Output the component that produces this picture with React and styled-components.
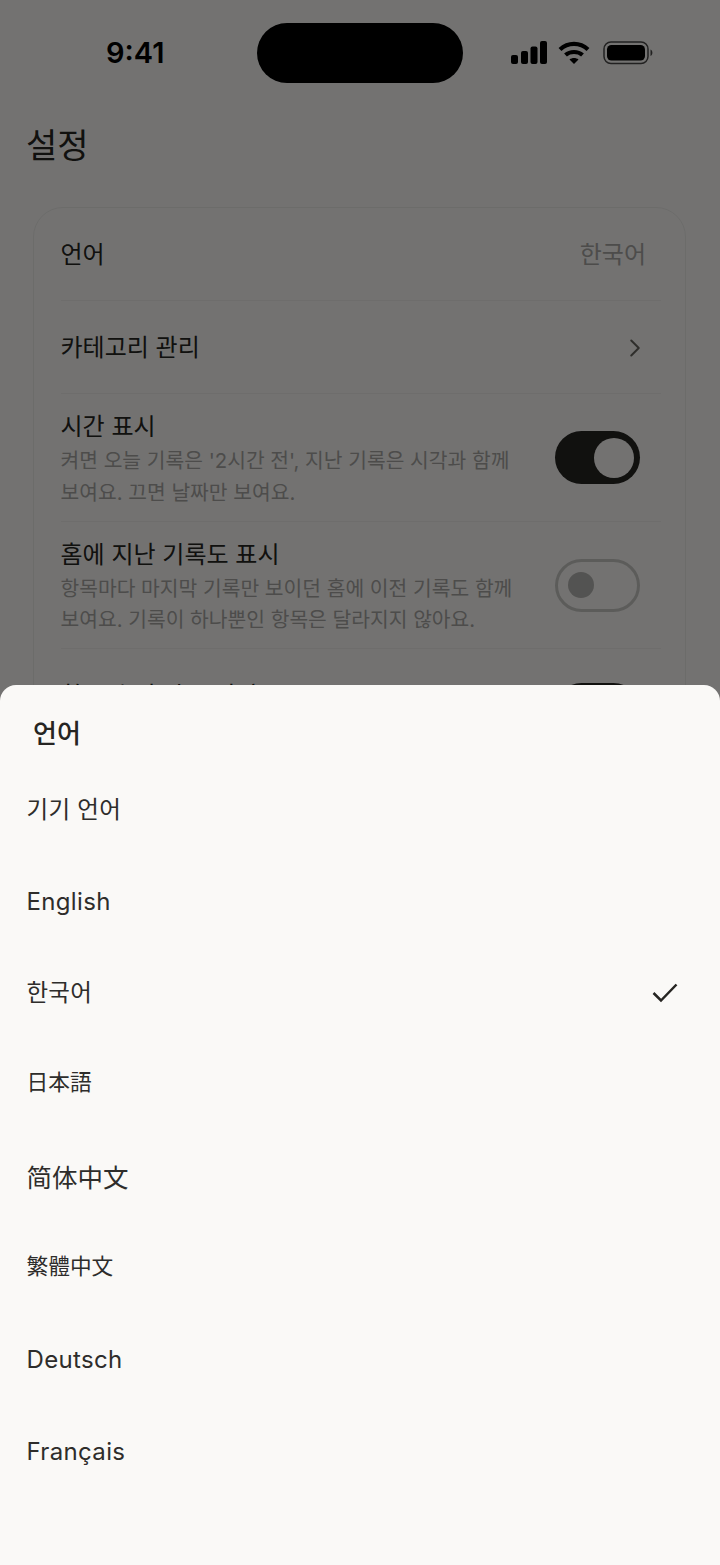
import React from "react";
import styled, { createGlobalStyle } from "styled-components";
import { ChevronRight } from "lucide-react";

const SANS = `Inter, "Noto Sans CJK KR", "Noto Sans", sans-serif`;

const Global = createGlobalStyle`
  html, body { margin: 0; padding: 0; background: #faf9f7; }
  * { box-sizing: border-box; }
  body { font-family: ${SANS}; -webkit-font-smoothing: antialiased; }
`;

const Screen = styled.div`
  position: relative;
  width: 720px;
  height: 1565px;
  overflow: hidden;
  background: #faf9f7;
  color: #262522;
`;

const StatusBar = styled.div`
  display: grid;
  grid-template-columns: 257px 206px 1fr;
  height: 106px;
  padding-top: 23px;
`;

const Clock = styled.div`
  height: 60px;
  padding-left: 106px;
  font: 600 29px/60px Inter, sans-serif;
  color: #000;
`;

const Island = styled.div`
  width: 206px;
  height: 60px;
  border-radius: 30px;
  background: #000;
`;

const StatusIcons = styled.div`
  display: flex;
  align-items: center;
  gap: 12px;
  height: 60px;
  padding-left: 48px;
`;

const Title = styled.h1`
  margin: 0;
  padding: 15px 26px 0;
  height: 101px;
  font: 400 34px/50px ${SANS};
  color: #262522;
`;

const Card = styled.div`
  margin: 0 34px 0 33px;
  padding: 0 24px 0 26.5px;
  height: 700px;
  border: 1.5px solid #ecebe8;
  border-radius: 30px;
`;

const Row = styled.div`
  display: flex;
  align-items: center;
  justify-content: space-between;
  height: 93px;
  padding-top: 2px;
  border-bottom: 1.5px solid #efeeeb;
`;

const RowLabel = styled.div`
  font-size: 24px;
  line-height: 32px;
  color: #262522;
`;

const RowValue = styled.div`
  padding-right: 15px;
  font-size: 24px;
  line-height: 32px;
  color: #a8a7a4;
`;

const Chevron = styled(ChevronRight)`
  margin-right: 11px;
  color: #66655f;
`;

const ToggleRow = styled.div`
  display: flex;
  align-items: flex-start;
  justify-content: space-between;
  height: 127.5px;
  padding-top: ${(p) => (p.$tall ? 31 : 17)}px;
  border-bottom: 1.5px solid #efeeeb;
`;

const ToggleText = styled.div`
  width: 470px;
`;

const ToggleTitle = styled.div`
  font-size: 24px;
  line-height: 32px;
  color: #262522;
`;

const ToggleDesc = styled.div`
  margin-top: 2px;
  font-size: 20.35px;
  line-height: 31.5px;
  color: #a8a7a4;
`;

const Track = styled.div`
  display: flex;
  align-items: center;
  justify-content: ${(p) => (p.$on ? "flex-end" : "flex-start")};
  flex: none;
  width: 85px;
  height: 53px;
  margin: ${(p) => (p.$raised ? 3 : 20)}px 21.5px 0 0;
  padding: 0 ${(p) => (p.$on ? 6 : 0)}px 0 ${(p) => (p.$on ? 0 : 10)}px;
  border-radius: 27px;
  background: ${(p) => (p.$on ? "#262522" : "transparent")};
  border: ${(p) => (p.$on ? "none" : "3px solid #c9c8c5")};
`;

const Knob = styled.div`
  border-radius: 50%;
  width: ${(p) => (p.$on ? 40 : 26)}px;
  height: ${(p) => (p.$on ? 40 : 26)}px;
  background: ${(p) => (p.$on ? "#faf9f7" : "#b6b5b2")};
`;

const Scrim = styled.div`
  position: absolute;
  inset: 0;
  background: rgba(0, 0, 0, 0.54);
`;

const Sheet = styled.div`
  position: absolute;
  left: 0;
  right: 0;
  top: 685px;
  bottom: 0;
  border-radius: 16px 16px 0 0;
  background: #faf9f7;
`;

const SheetTitle = styled.h2`
  margin: 0;
  padding: 31px 33px 0;
  height: 77px;
  font: 500 26px/36px ${SANS};
  color: #262522;
`;

const Option = styled.div`
  display: flex;
  align-items: center;
  justify-content: space-between;
  height: 91.7px;
  padding: 0 42px 0 26.5px;
  color: #2e2d2b;
`;

const OptionLabel = styled.span`
  margin-top: ${(p) => p.$nudge}px;
  font-size: ${(p) => p.$size}px;
  letter-spacing: ${(p) => p.$track}px;
`;

const Check = styled.svg`
  margin-top: 4px;
`;

const CheckIcon = () => (
  <Check width="26" height="22" viewBox="0 0 26 22" fill="none" stroke="#262522" strokeWidth="2.500">
    <path d="M1.500 11 L9 18.500 L24.500 2.500" />
  </Check>
);

const Signal = () => (
  <svg width="36" height="24" viewBox="0 0 36 24" fill="#000">
    <rect x="0" y="14" width="7" height="9" rx="2" />
    <rect x="10" y="10" width="7" height="13" rx="2" />
    <rect x="19.500" y="5.500" width="7" height="17.500" rx="2" />
    <rect x="29" y="0" width="7" height="23" rx="2" />
  </svg>
);

const WifiIcon = styled.svg`
  margin: 0 1px 0 -1px;
`;

const Wifi = () => (
  <WifiIcon width="32" height="24" viewBox="0 0 32 24" fill="none" stroke="#000" strokeWidth="4.200">
    <path d="M2 8.500 C10 1 22 1 30 8.500" />
    <path d="M7.500 14 C12 10 20 10 24.500 14" />
    <path d="M16 23 L11.500 18.500 C14 16.500 18 16.500 20.500 18.500 Z" fill="#000" stroke="none" />
  </WifiIcon>
);

const Battery = () => (
  <svg width="51" height="24" viewBox="0 0 51 24">
    <rect x="1" y="1" width="44" height="21.500" rx="7" fill="none" stroke="#4a4948" strokeWidth="1.500" />
    <rect x="4" y="4" width="38" height="15.500" rx="4.500" fill="#000" />
    <path d="M47.500 8.500 C50 9 50 14.500 47.500 15 Z" fill="#4a4948" />
  </svg>
);

const options = [
  { label: "기기 언어", size: 23.5, track: 0.3, nudge: 0 },
  { label: "English", size: 24, track: 0.35, nudge: 4 },
  { label: "한국어", size: 23.5, track: 0.2, nudge: 0, selected: true },
  { label: "日本語", size: 21.7, track: 0, nudge: -4 },
  { label: "简体中文", size: 25.5, track: 0, nudge: 2 },
  { label: "繁體中文", size: 21.7, track: 0, nudge: -4 },
  { label: "Deutsch", size: 24, track: 0.35, nudge: 4 },
  { label: "Français", size: 24, track: 0.35, nudge: 4 },
];

export default function App() {
  return (
    <Screen>
      <Global />
      <StatusBar>
        <Clock>9:41</Clock>
        <Island />
        <StatusIcons>
          <Signal />
          <Wifi />
          <Battery />
        </StatusIcons>
      </StatusBar>
      <Title>설정</Title>
      <Card>
        <Row>
          <RowLabel>언어</RowLabel>
          <RowValue>한국어</RowValue>
        </Row>
        <Row>
          <RowLabel>카테고리 관리</RowLabel>
          <Chevron size={30} strokeWidth={1.6} />
        </Row>
        <ToggleRow>
          <ToggleText>
            <ToggleTitle>시간 표시</ToggleTitle>
            <ToggleDesc>켜면 오늘 기록은 '2시간 전', 지난 기록은 시각과 함께 보여요. 끄면 날짜만 보여요.</ToggleDesc>
          </ToggleText>
          <Track $on><Knob $on /></Track>
        </ToggleRow>
        <ToggleRow>
          <ToggleText>
            <ToggleTitle>홈에 지난 기록도 표시</ToggleTitle>
            <ToggleDesc>항목마다 마지막 기록만 보이던 홈에 이전 기록도 함께 보여요. 기록이 하나뿐인 항목은 달라지지 않아요.</ToggleDesc>
          </ToggleText>
          <Track><Knob /></Track>
        </ToggleRow>
        <ToggleRow $tall>
          <ToggleText>
            <ToggleTitle>항목 순서 자동 정렬</ToggleTitle>
          </ToggleText>
          <Track $on $raised><Knob $on /></Track>
        </ToggleRow>
      </Card>
      <Scrim />
      <Sheet>
        <SheetTitle>언어</SheetTitle>
        {options.map((o) => (
          <Option key={o.label}>
            <OptionLabel $size={o.size} $track={o.track} $nudge={o.nudge}>{o.label}</OptionLabel>
            {o.selected && <CheckIcon />}
          </Option>
        ))}
      </Sheet>
    </Screen>
  );
}
